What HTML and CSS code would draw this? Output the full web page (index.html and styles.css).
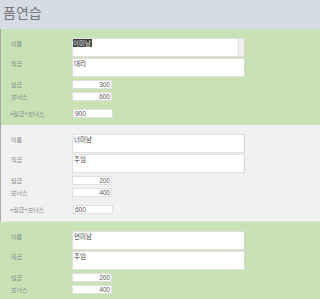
FILE: index.html
```html
<!DOCTYPE html>
<html lang="ko">
<head>
<meta charset="utf-8">
<title>폼연습</title>
<link rel="stylesheet" href="styles.css">
</head>
<body>
<header class="top">폼연습</header>

<section class="card green edge">
  <div class="row">
    <label class="lab lab-tall">이름</label>
    <div class="ta ta-box" role="textbox" aria-multiline="true">
      <div class="ta-text"><span class="sel">이미남</span></div>
      <div class="track"></div>
    </div>
  </div>
  <div class="row r2">
    <label class="lab lab-tall">직급</label>
    <textarea class="ta">대리</textarea>
  </div>
  <div class="row r3 small">
    <label class="lab">월급</label>
    <input class="num" value="300">
  </div>
  <div class="row r3 small">
    <label class="lab">보너스</label>
    <input class="num" value="600">
  </div>
  <div class="row r5 small">
    <label class="lab lab-sum">=월급+보너스</label>
    <input class="num sum" value="900">
  </div>
</section>

<section class="card gray edge">
  <div class="row">
    <label class="lab lab-tall">이름</label>
    <textarea class="ta">너미남</textarea>
  </div>
  <div class="row r2">
    <label class="lab lab-tall">직급</label>
    <textarea class="ta">주임</textarea>
  </div>
  <div class="row r3 small">
    <label class="lab">월급</label>
    <input class="num" value="200">
  </div>
  <div class="row r3 small">
    <label class="lab">보너스</label>
    <input class="num" value="400">
  </div>
  <div class="row r5 small">
    <label class="lab lab-sum">=월급+보너스</label>
    <input class="num sum" value="600">
  </div>
</section>

<section class="card green divided">
  <div class="row">
    <label class="lab lab-tall">이름</label>
    <textarea class="ta">언미남</textarea>
  </div>
  <div class="row r2">
    <label class="lab lab-tall">직급</label>
    <textarea class="ta">주임</textarea>
  </div>
  <div class="row r3 small">
    <label class="lab">월급</label>
    <input class="num" value="200">
  </div>
  <div class="row r3 small">
    <label class="lab">보너스</label>
    <input class="num" value="400">
  </div>
</section>
</body>
</html>
```

FILE: styles.css
```css
body {
  margin: 0;
  background: #ffffff;
  font-family: "Noto Sans CJK KR", "Noto Sans", sans-serif;
}

.top {
  height: 29px;
  box-sizing: border-box;
  padding: 3px 3px 0;
  background: #d5dce6;
  color: #777777;
  font-size: 14px;
  line-height: 18px;
}

.card {
  height: 96px;
  box-sizing: border-box;
  padding: 9px 0 7px;
}

.green {
  background: #c8e1b5;
}

.gray {
  background: #f1f1f1;
}

.edge {
  box-shadow: inset 1px 0 0 #a8a8a8;
}

.divided {
  height: 78px;
  border-top: 1px solid #e3e7df;
}

.row {
  display: flex;
  align-items: flex-start;
}

.small {
  align-items: center;
}

.r2 {
  margin-top: 1px;
}

.r3 {
  margin-top: 3px;
}

.r5 {
  margin-top: 8px;
}

.lab {
  width: 72px;
  flex: none;
  box-sizing: border-box;
  padding-left: 11px;
  color: #8a8a8a;
  font-size: 6px;
  line-height: 9px;
}

.lab-tall {
  padding-top: 1px;
}

.lab-sum {
  padding-left: 10px;
}

.ta {
  width: 173px;
  height: 19px;
  box-sizing: border-box;
  margin: 0;
  padding: 0 1px;
  border: 1px solid #e0e0e0;
  border-right-color: #d4d4d4;
  background: #ffffff;
  color: #3a3a3a;
  font-family: "Noto Sans CJK KR", "Noto Sans", sans-serif;
  font-size: 6.5px;
  line-height: 8px;
  resize: none;
  overflow: hidden;
  outline: none;
}

.ta-box {
  display: flex;
  padding: 0;
}

.ta-text {
  flex: 1;
  padding: 0 0 0 0;
}

.sel {
  display: inline-block;
  padding: 0 1px 0 0;
  background: #3c3c3c;
  color: #f2f2f2;
  line-height: 8px;
}

.track {
  width: 7px;
  flex: none;
  background: #efefef;
}

.num {
  width: 40px;
  height: 9px;
  box-sizing: border-box;
  margin: 0;
  padding: 0 1px;
  border: 1px solid #e0e0e0;
  background: #ffffff;
  color: #555555;
  font-family: "Liberation Sans", "Noto Sans", sans-serif;
  font-size: 6.5px;
  text-align: right;
  outline: none;
}

.sum {
  text-align: left;
  margin-left: 1px;
}
```
